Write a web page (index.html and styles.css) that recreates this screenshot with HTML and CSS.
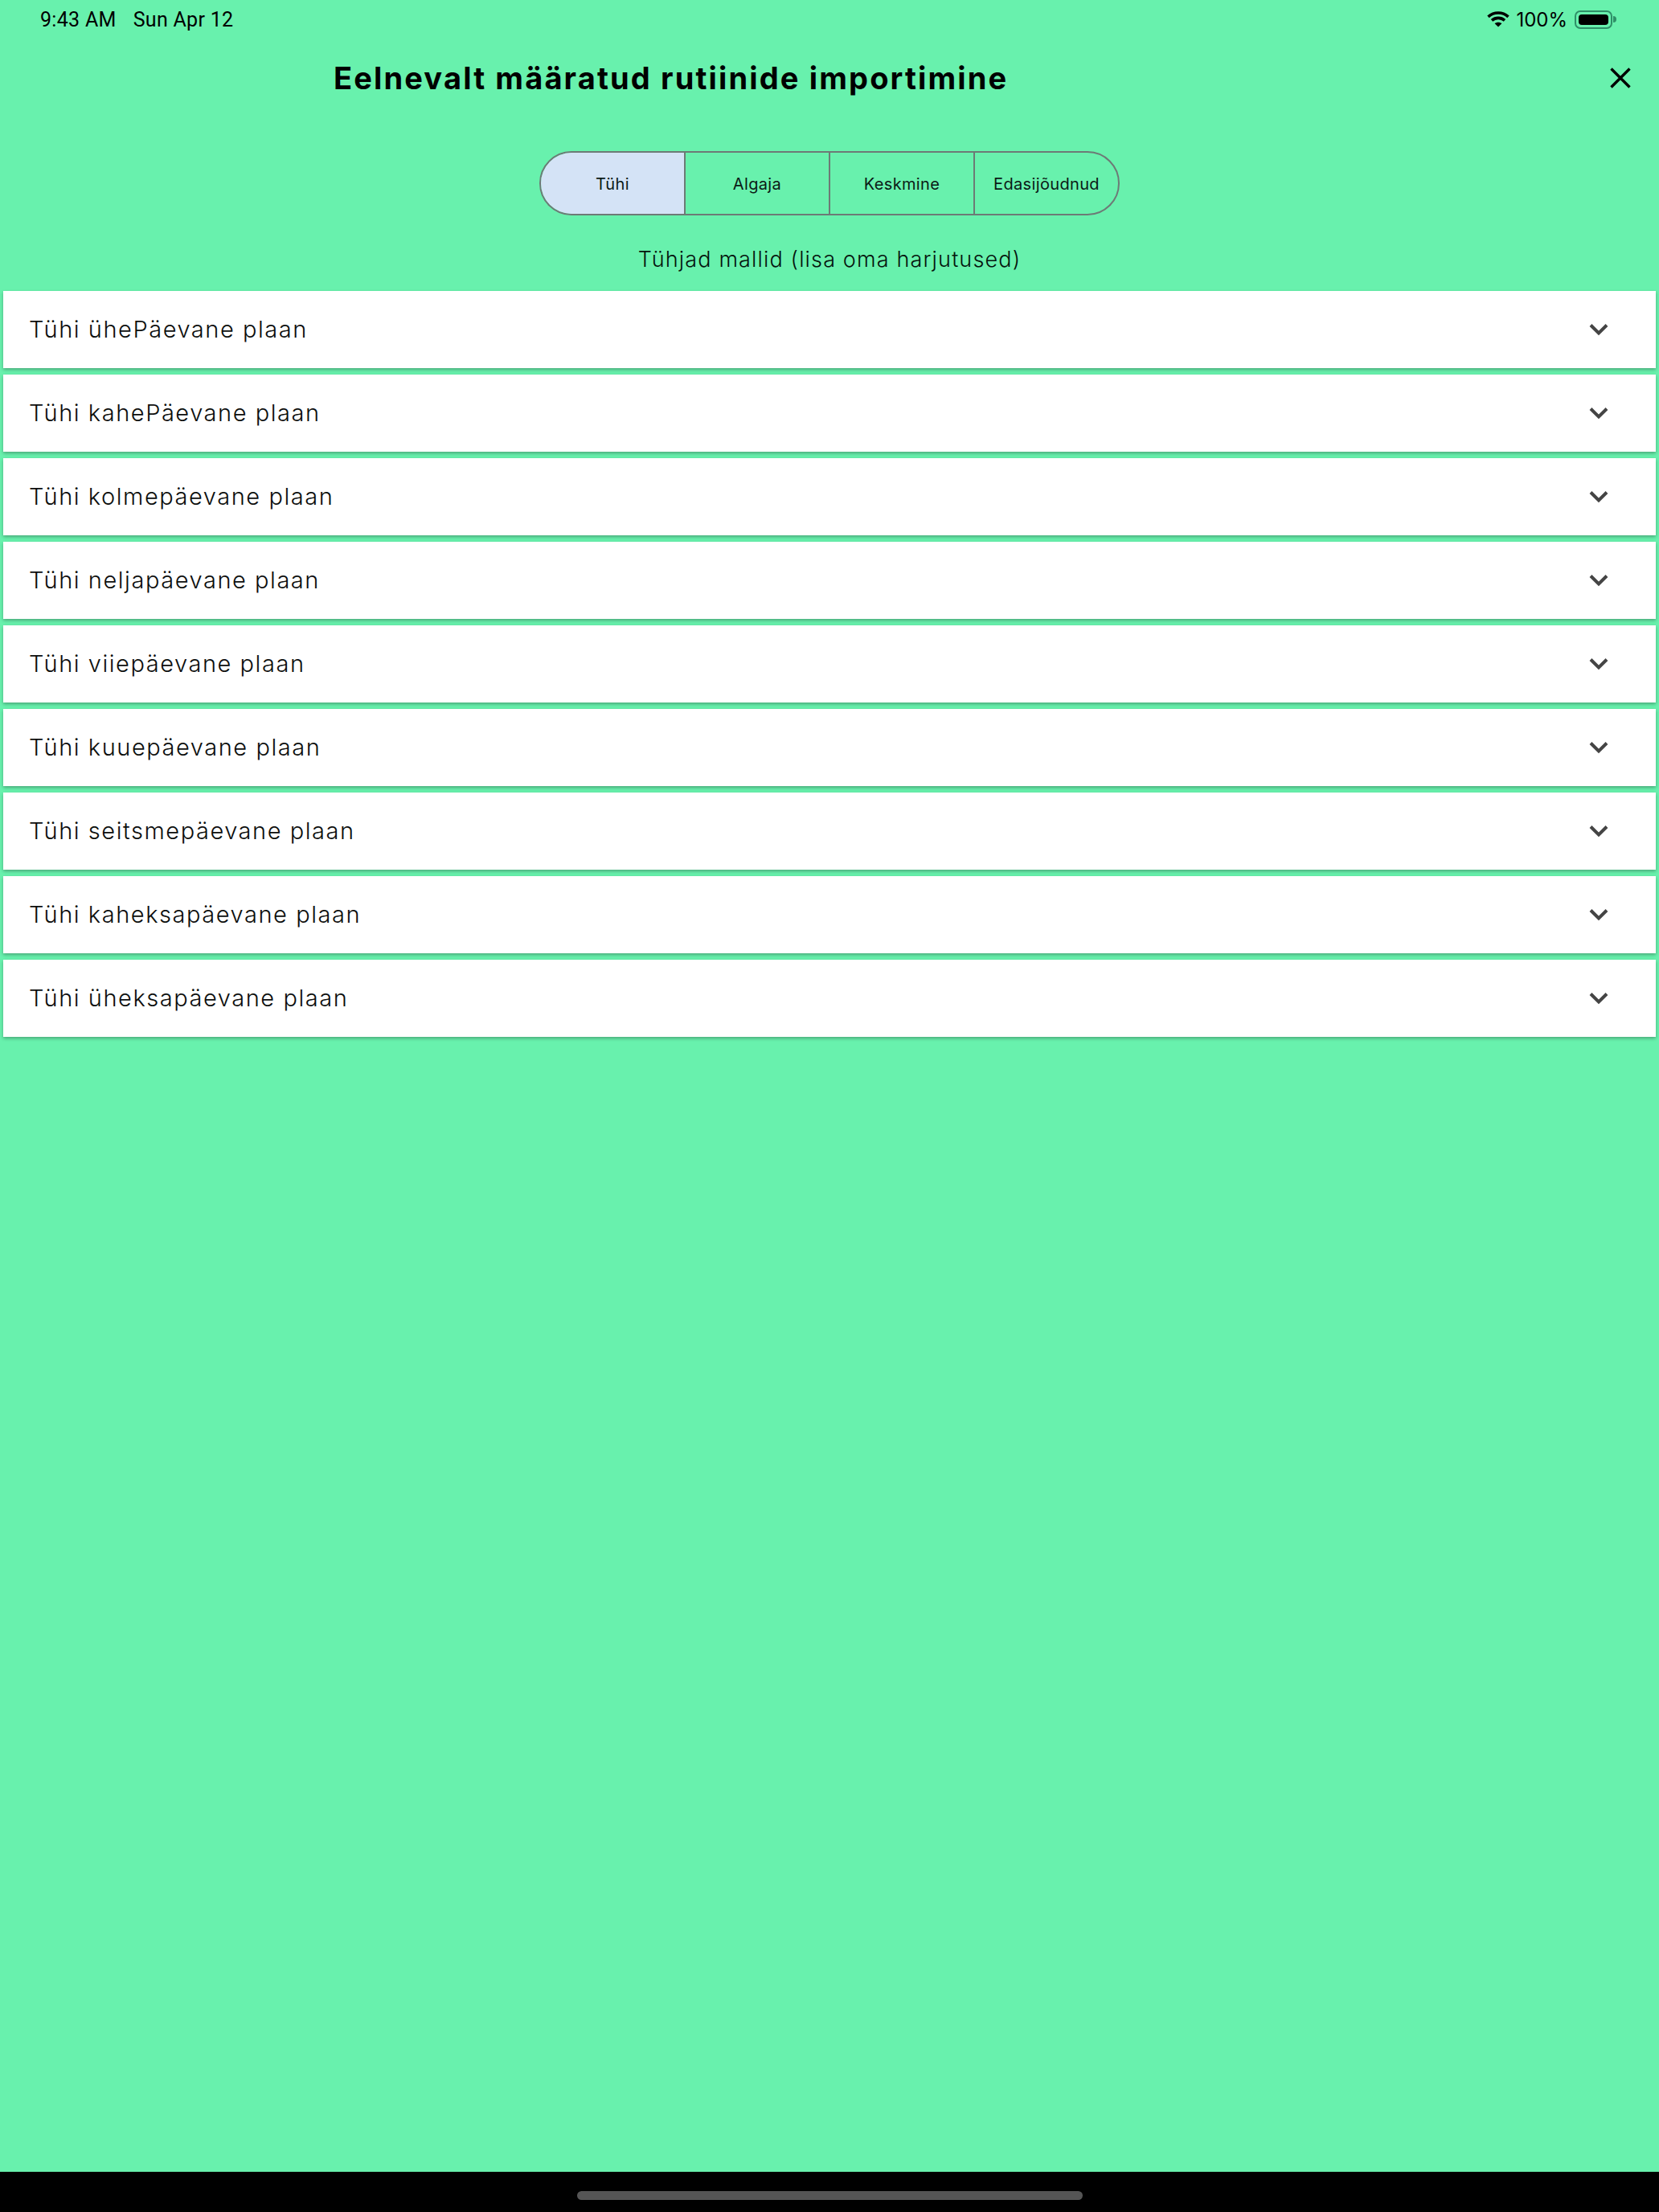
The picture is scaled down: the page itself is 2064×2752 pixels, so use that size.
FILE: index.html
```html
<!DOCTYPE html>
<html lang="en">
	<head>
		<meta charset="utf-8">
		<title>Eelnevalt määratud rutiinide importimine</title>
		<link rel="stylesheet" href="styles.css">
	</head>
	<body>
		<div class="status">
			<div class="status-left">
				<span class="time">9:43 AM</span>
				<span>Sun Apr 12</span>
			</div>
			<div class="status-right">
				<svg class="wifi" width="28" height="20" viewBox="0 0 28 20">
					<path d="M1.5 6.8C8.6 0.4 19.4 0.4 26.5 6.8" />
					<path d="M6 11.4C10.6 7.4 17.4 7.4 22 11.4" />
					<path class="wifi-dot" d="M14 19.6L9.6 15.2C12.2 13.2 15.8 13.2 18.4 15.2Z" />
				</svg>
				<span class="percent">100%</span>
				<div class="battery"><div class="battery-fill"></div></div>
				<div class="battery-nub"></div>
			</div>
		</div>

		<div class="header">
			<h1>Eelnevalt määratud rutiinide importimine</h1>
			<svg class="close" width="26" height="26" viewBox="0 0 26 26">
				<path d="M1.5 1.5L24.5 24.5M24.5 1.5L1.5 24.5" />
			</svg>
		</div>

		<div class="tabs">
			<div class="tab selected">Tühi</div>
			<div class="tab">Algaja</div>
			<div class="tab">Keskmine</div>
			<div class="tab">Edasijõudnud</div>
		</div>

		<p class="caption">Tühjad mallid (lisa oma harjutused)</p>

		<div class="list">
			<div class="row"><span>Tühi ühePäevane plaan</span><svg class="chevron" width="24" height="16" viewBox="0 0 24 16"><path d="M2 2.5L12 12.5L22 2.5" /></svg></div>
			<div class="row"><span>Tühi kahePäevane plaan</span><svg class="chevron" width="24" height="16" viewBox="0 0 24 16"><path d="M2 2.5L12 12.5L22 2.5" /></svg></div>
			<div class="row"><span>Tühi kolmepäevane plaan</span><svg class="chevron" width="24" height="16" viewBox="0 0 24 16"><path d="M2 2.5L12 12.5L22 2.5" /></svg></div>
			<div class="row"><span>Tühi neljapäevane plaan</span><svg class="chevron" width="24" height="16" viewBox="0 0 24 16"><path d="M2 2.5L12 12.5L22 2.5" /></svg></div>
			<div class="row"><span>Tühi viiepäevane plaan</span><svg class="chevron" width="24" height="16" viewBox="0 0 24 16"><path d="M2 2.5L12 12.5L22 2.5" /></svg></div>
			<div class="row"><span>Tühi kuuepäevane plaan</span><svg class="chevron" width="24" height="16" viewBox="0 0 24 16"><path d="M2 2.5L12 12.5L22 2.5" /></svg></div>
			<div class="row"><span>Tühi seitsmepäevane plaan</span><svg class="chevron" width="24" height="16" viewBox="0 0 24 16"><path d="M2 2.5L12 12.5L22 2.5" /></svg></div>
			<div class="row"><span>Tühi kaheksapäevane plaan</span><svg class="chevron" width="24" height="16" viewBox="0 0 24 16"><path d="M2 2.5L12 12.5L22 2.5" /></svg></div>
			<div class="row"><span>Tühi üheksapäevane plaan</span><svg class="chevron" width="24" height="16" viewBox="0 0 24 16"><path d="M2 2.5L12 12.5L22 2.5" /></svg></div>
		</div>

		<div class="home"><div class="home-bar"></div></div>
	</body>
</html>
```

FILE: styles.css
```css
* { padding: 0; margin: 0; box-sizing: border-box; }
html, body { height: 100%; }
body {
	display: flex;
	flex-direction: column;
	background: #68f1ad;
	color: #000000;
	font-family: Inter, "Noto Sans", sans-serif;
	overflow: hidden;
}

.status {
	display: flex;
	justify-content: space-between;
	align-items: center;
	height: 46px;
	padding: 2px 52px 0 50px;
	font-family: Roboto, Inter, sans-serif;
	font-size: 25px;
	letter-spacing: 0.3px;
	flex: none;
}
.status-left { display: flex; gap: 21px; }
.status-right { display: flex; align-items: center; margin-right: 1px; }
.wifi path { fill: none; stroke: #000000; stroke-width: 3.6; }
.wifi .wifi-dot { fill: #000000; stroke: none; }
.percent { margin-left: 8px; font-family: Inter, sans-serif; font-size: 24px; letter-spacing: 0; }
.battery {
	width: 47px;
	height: 23px;
	margin-left: 9px;
	padding: 3px;
	border: 2px solid #2f8f68;
	border-radius: 7px;
}
.battery-fill { height: 100%; background: #000000; border-radius: 4px; }
.battery-nub {
	width: 4px;
	height: 8px;
	margin-left: 1px;
	background: #2f8f68;
	border-radius: 0 4px 4px 0;
}

.header {
	display: flex;
	justify-content: space-between;
	align-items: center;
	height: 102px;
	padding: 0 35px 0 415px;
	flex: none;
}
h1 {
	font-size: 38px;
	font-weight: 700;
	letter-spacing: 2.15px;
	white-space: nowrap;
}
.close path { fill: none; stroke: #000000; stroke-width: 3.4; }

.tabs {
	display: flex;
	align-self: center;
	width: 722px;
	height: 80px;
	margin-top: 40px;
	border: 2px solid #6d7a76;
	border-radius: 40px;
	overflow: hidden;
	flex: none;
}
.tab {
	flex: 1;
	display: flex;
	align-items: center;
	justify-content: center;
	padding-top: 2px;
	font-size: 20px;
	letter-spacing: 0.35px;
	color: #0b1a16;
	border-left: 2px solid #6d7a76;
}
.tab:first-child { border-left: none; }
.selected { background: #d4e3f6; }

.caption {
	height: 94px;
	padding-top: 37px;
	text-align: center;
	font-size: 27px;
	font-weight: 300;
	letter-spacing: 1.15px;
	line-height: 36px;
	color: #05140d;
	flex: none;
}

.list {
	display: flex;
	flex-direction: column;
	gap: 8px;
	padding: 0 4px;
	flex: 1;
}
.row {
	display: flex;
	justify-content: space-between;
	align-items: center;
	height: 96px;
	padding: 0 59px 1px 33px;
	background: #ffffff;
	color: #0c0e0d;
	font-size: 29px;
	font-weight: 300;
	letter-spacing: 1.55px;
	box-shadow: 0 2px 4px rgba(0,0,0,.3);
}
.row span { margin-left: -1px; }
.chevron { margin-top: 1px; }
.chevron path { fill: none; stroke: #444444; stroke-width: 4; }

.home {
	display: flex;
	justify-content: center;
	height: 50px;
	padding-top: 24px;
	background: #000000;
	flex: none;
}
.home-bar {
	width: 629px;
	height: 11px;
	background: #555555;
	border-radius: 6px;
}
```
